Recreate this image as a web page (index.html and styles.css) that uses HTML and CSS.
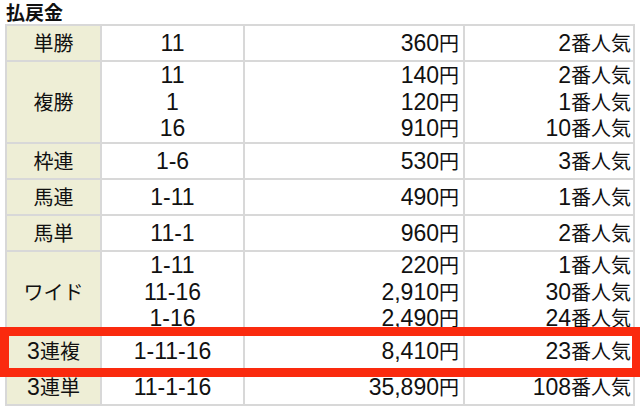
FILE: index.html
```html
<!DOCTYPE html>
<html lang="ja">
<head>
<meta charset="utf-8">
<link rel="stylesheet" href="styles.css">
</head>
<body>
<div class="page">
  <div class="title">払戻金</div>
  <table class="pay">
    <tr>
      <th class="c1">単勝</th>
      <td class="c2"><span class="n">11</span></td>
      <td class="c3"><span class="n">360</span>円</td>
      <td class="c4"><span class="n">2</span>番人気</td>
    </tr>
    <tr>
      <th class="c1">複勝</th>
      <td class="c2"><span class="n">11</span><br><span class="n">1</span><br><span class="n">16</span></td>
      <td class="c3"><span class="n">140</span>円<br><span class="n">120</span>円<br><span class="n">910</span>円</td>
      <td class="c4"><span class="n">2</span>番人気<br><span class="n">1</span>番人気<br><span class="n">10</span>番人気</td>
    </tr>
    <tr>
      <th class="c1">枠連</th>
      <td class="c2"><span class="n">1-6</span></td>
      <td class="c3"><span class="n">530</span>円</td>
      <td class="c4"><span class="n">3</span>番人気</td>
    </tr>
    <tr>
      <th class="c1">馬連</th>
      <td class="c2"><span class="n">1-11</span></td>
      <td class="c3"><span class="n">490</span>円</td>
      <td class="c4"><span class="n">1</span>番人気</td>
    </tr>
    <tr>
      <th class="c1">馬単</th>
      <td class="c2"><span class="n">11-1</span></td>
      <td class="c3"><span class="n">960</span>円</td>
      <td class="c4"><span class="n">2</span>番人気</td>
    </tr>
    <tr>
      <th class="c1">ワイド</th>
      <td class="c2"><span class="n">1-11</span><br><span class="n">11-16</span><br><span class="n">1-16</span></td>
      <td class="c3"><span class="n">220</span>円<br><span class="n">2,910</span>円<br><span class="n">2,490</span>円</td>
      <td class="c4"><span class="n">1</span>番人気<br><span class="n">30</span>番人気<br><span class="n">24</span>番人気</td>
    </tr>
    <tr>
      <th class="c1"><span class="n">3</span>連複</th>
      <td class="c2"><span class="n">1-11-16</span></td>
      <td class="c3"><span class="n">8,410</span>円</td>
      <td class="c4"><span class="n">23</span>番人気</td>
    </tr>
    <tr>
      <th class="c1"><span class="n">3</span>連単</th>
      <td class="c2"><span class="n">11-1-16</span></td>
      <td class="c3"><span class="n">35,890</span>円</td>
      <td class="c4"><span class="n">108</span>番人気</td>
    </tr>
  </table>
  <div class="highlight"></div>
</div>
</body>
</html>
```

FILE: styles.css
```css
html, body {
  margin: 0;
  padding: 0;
  background: #ffffff;
}
body {
  font-family: "Noto Sans CJK JP", "Noto Sans", sans-serif;
  color: #111111;
  width: 640px;
  height: 411px;
  overflow: hidden;
}
.page {
  position: relative;
  padding: 0 5px;
}
.title {
  font-size: 19px;
  font-weight: bold;
  line-height: 24px;
  height: 24px;
  padding-left: 1px;
}
.pay {
  border-collapse: separate;
  border-spacing: 0;
  table-layout: fixed;
  width: 630px;
  border-top: 2px solid #d8d8d8;
  border-left: 2px solid #d8d8d8;
  font-size: 20px;
}
.pay th,
.pay td {
  border-right: 2px solid #d8d8d8;
  border-bottom: 2px solid #d8d8d8;
  height: 34px;
  padding: 0;
  line-height: 26.67px;
  font-weight: normal;
  vertical-align: middle;
  white-space: nowrap;
}
.pay .n {
  font-family: "Liberation Sans", Arial, sans-serif;
  font-size: 23px;
  line-height: 20px;
}
.pay .c1 {
  width: 93px;
  background: #eeeed6;
  text-align: center;
}
.pay .c2 {
  width: 141px;
  text-align: center;
}
.pay .c3 {
  width: 214px;
  padding-right: 4px;
  text-align: right;
}
.pay .c4 {
  width: 166px;
  padding-right: 2px;
  text-align: right;
}
.highlight {
  position: absolute;
  left: 0;
  top: 327px;
  width: 640px;
  height: 50px;
  box-sizing: border-box;
  border: 9px solid #fa2a0e;
  border-right-width: 8px;
}
```
